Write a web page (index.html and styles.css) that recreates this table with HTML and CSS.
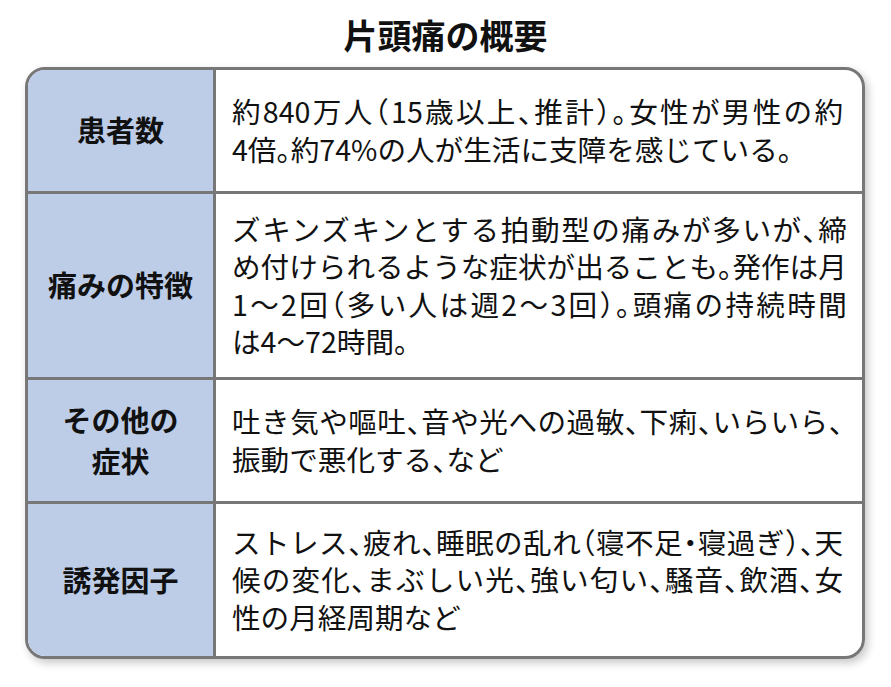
FILE: index.html
```html
<!DOCTYPE html>
<html lang="ja">
<head>
<meta charset="utf-8">
<title>片頭痛の概要</title>
<link rel="stylesheet" href="styles.css">
</head>
<body>
<h1 class="title">片頭痛の概要</h1>
<div class="table">
  <div class="row r1">
    <div class="label">患者数</div>
    <div class="desc">
      <p class="text">
        <span class="ln">約840万人（15歳以上、推計）。女性が男性の約</span>
        <span class="ln">4倍。約74%の人が生活に支障を感じている。</span>
      </p>
    </div>
  </div>
  <div class="row r2">
    <div class="label">痛みの特徴</div>
    <div class="desc">
      <p class="text">
        <span class="ln">ズキンズキンとする拍動型の痛みが多いが、締</span>
        <span class="ln">め付けられるような症状が出ることも。発作は月</span>
        <span class="ln">1〜2回（多い人は週2〜3回）。頭痛の持続時間</span>
        <span class="ln">は4〜72時間。</span>
      </p>
    </div>
  </div>
  <div class="row r3">
    <div class="label">その他の<br>症状</div>
    <div class="desc">
      <p class="text">
        <span class="ln">吐き気や嘔吐、音や光への過敏、下痢、いらいら、</span>
        <span class="ln">振動で悪化する、など</span>
      </p>
    </div>
  </div>
  <div class="row r4">
    <div class="label">誘発因子</div>
    <div class="desc">
      <p class="text">
        <span class="ln">ストレス、疲れ、睡眠の乱れ（寝不足・寝過ぎ）、天</span>
        <span class="ln">候の変化、まぶしい光、強い匂い、騒音、飲酒、女</span>
        <span class="ln">性の月経周期など</span>
      </p>
    </div>
  </div>
</div>
</body>
</html>
```

FILE: styles.css
```css
html, body {
  margin: 0;
  padding: 0;
  background: #ffffff;
}

body {
  font-family: "Noto Sans CJK JP", "Noto Sans", sans-serif;
  color: #111111;
  width: 891px;
  height: 687px;
  overflow: hidden;
}

.title {
  margin: 0;
  height: 67px;
  display: flex;
  align-items: center;
  justify-content: center;
  font-size: 34px;
  font-weight: 700;
  line-height: 1;
  padding-top: 2px;
  box-sizing: border-box;
}

.table {
  margin-left: 25px;
  width: 840px;
  box-sizing: border-box;
  border: 3px solid #777777;
  border-radius: 20px;
  overflow: hidden;
  box-shadow: 3px 4px 8px rgba(0, 0, 0, 0.22);
}

.row {
  display: grid;
  grid-template-columns: 188px 1fr;
  box-sizing: border-box;
}

.row + .row {
  border-top: 3px solid #777777;
}

.r1 { height: 121px; }
.r2 { height: 186px; }
.r3 { height: 124px; }
.r4 { height: 155px; }

.label {
  background: #bdcde8;
  border-right: 3px solid #777777;
  display: flex;
  align-items: center;
  justify-content: center;
  text-align: center;
  font-size: 29px;
  font-weight: 700;
  line-height: 41px;
  padding-bottom: 2px;
}

.desc {
  display: flex;
  align-items: center;
  padding: 0 19px 2px 16px;
}

.text {
  margin: 0;
  width: 100%;
  font-size: 28.6px;
  line-height: 37.5px;
  white-space: nowrap;
  font-feature-settings: "halt";
}

.ln {
  display: block;
  text-align: justify;
  text-align-last: justify;
  text-justify: inter-character;
}

.ln:last-child {
  text-align-last: left;
}
```
